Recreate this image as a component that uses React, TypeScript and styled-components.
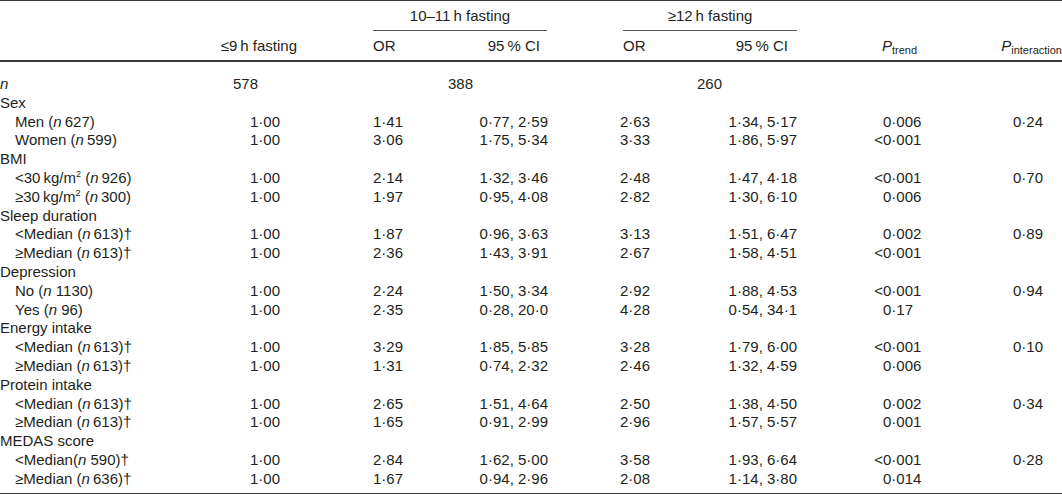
import React from 'react';
import styled, { createGlobalStyle } from 'styled-components';

const GlobalStyle = createGlobalStyle`
    html, body {
        margin: 0;
        padding: 0;
        background: #ffffff;
    }
    body {
        font-family: 'Liberation Sans', Arial, sans-serif;
        color: #231f20;
    }
`;

const COLUMNS = '210px 90px 133px 115px 135px 114px 124px 141px';

const Table = styled.div`
    width: 1062px;
    font-size: 15px;
    border-top: 1px solid #3a3a3a;
    border-bottom: 2px solid #3a3a3a;
`;

const Head = styled.div`
    border-bottom: 2px solid #3a3a3a;
`;

const Row = styled.div<{ $height?: number }>`
    display: grid;
    grid-template-columns: ${COLUMNS};
    height: ${(p) => p.$height ?? 18.8}px;
    line-height: ${(p) => p.$height ?? 18.8}px;
    white-space: nowrap;
`;

const Body = styled.div`
    padding: 13px 0 4.4px;
`;

const Cell = styled.div<{ $align?: 'left' | 'right' | 'center'; $padL?: number; $padR?: number }>`
    text-align: ${(p) => p.$align ?? 'left'};
    padding-left: ${(p) => p.$padL ?? 0}px;
    padding-right: ${(p) => p.$padR ?? 0}px;
`;

const Label = styled.div<{ $indent?: boolean }>`
    padding-left: ${(p) => (p.$indent ? 15 : 0)}px;
`;

const SpanHead = styled.div<{ $col: string; $offset: number }>`
    grid-column: ${(p) => p.$col};
    display: flex;
    padding-left: ${(p) => p.$offset}px;
`;

const SpanTitle = styled.div`
    width: 174px;
    text-align: center;
    line-height: 29px;
    border-bottom: 1px solid #555;
`;

const Em = styled.i``;

const Sub = styled.sub`
    font-size: 11px;
    vertical-align: -3px;
    line-height: 0;
`;

const Sup = styled.sup`
    font-size: 9px;
    vertical-align: 6px;
    line-height: 0;
`;

const Hang = styled.span`
    margin-left: -0.584em;
`;

type DataRow = { label: React.ReactNode; vals?: string[] };

const N = ({ v }: { v: string }) => (
    <>
        (<Em>n</Em>
        {'\u2009'}
        {v})
    </>
);

const rows: DataRow[] = [
    { label: 'Sex' },
    { label: <>Men <N v="627" /></>, vals: ['1·00', '1·41', '0·77, 2·59', '2·63', '1·34, 5·17', '0·006', '0·24'] },
    { label: <>Women <N v="599" /></>, vals: ['1·00', '3·06', '1·75, 5·34', '3·33', '1·86, 5·97', '<0·001', ''] },
    { label: 'BMI' },
    {
        label: <>&lt;30{'\u2009'}kg/m<Sup>2</Sup> <N v="926" /></>,
        vals: ['1·00', '2·14', '1·32, 3·46', '2·48', '1·47, 4·18', '<0·001', '0·70'],
    },
    {
        label: <>≥30{'\u2009'}kg/m<Sup>2</Sup> <N v="300" /></>,
        vals: ['1·00', '1·97', '0·95, 4·08', '2·82', '1·30, 6·10', '0·006', ''],
    },
    { label: 'Sleep duration' },
    { label: <>&lt;Median <N v="613" />†</>, vals: ['1·00', '1·87', '0·96, 3·63', '3·13', '1·51, 6·47', '0·002', '0·89'] },
    { label: <>≥Median <N v="613" />†</>, vals: ['1·00', '2·36', '1·43, 3·91', '2·67', '1·58, 4·51', '<0·001', ''] },
    { label: 'Depression' },
    { label: <>No (<Em>n</Em> 1130)</>, vals: ['1·00', '2·24', '1·50, 3·34', '2·92', '1·88, 4·53', '<0·001', '0·94'] },
    { label: <>Yes (<Em>n</Em> 96)</>, vals: ['1·00', '2·35', '0·28, 20·0', '4·28', '0·54, 34·1', '0·17', ''] },
    { label: 'Energy intake' },
    { label: <>&lt;Median <N v="613" />†</>, vals: ['1·00', '3·29', '1·85, 5·85', '3·28', '1·79, 6·00', '<0·001', '0·10'] },
    { label: <>≥Median <N v="613" />†</>, vals: ['1·00', '1·31', '0·74, 2·32', '2·46', '1·32, 4·59', '0·006', ''] },
    { label: 'Protein intake' },
    { label: <>&lt;Median <N v="613" />†</>, vals: ['1·00', '2·65', '1·51, 4·64', '2·50', '1·38, 4·50', '0·002', '0·34'] },
    { label: <>≥Median <N v="613" />†</>, vals: ['1·00', '1·65', '0·91, 2·99', '2·96', '1·57, 5·57', '0·001', ''] },
    { label: 'MEDAS score' },
    { label: <>&lt;Median(<Em>n</Em> 590)†</>, vals: ['1·00', '2·84', '1·62, 5·00', '3·58', '1·93, 6·64', '<0·001', '0·28'] },
    { label: <>≥Median <N v="636" />†</>, vals: ['1·00', '1·67', '0·94, 2·96', '2·08', '1·14, 3·80', '0·014', ''] },
];

const Trend = ({ v }: { v: string }) =>
    v.startsWith('<') ? (
        <>
            <Hang>&lt;</Hang>
            {v.slice(1)}
        </>
    ) : (
        <>{v}</>
    );

const App = () => {
    return (
        <>
            <GlobalStyle />
            <Table>
                <Head>
                    <Row $height={30}>
                        <Cell />
                        <Cell />
                        <SpanHead $col="3 / 5" $offset={73}>
                            <SpanTitle>10–11{'\u2009'}h fasting</SpanTitle>
                        </SpanHead>
                        <SpanHead $col="5 / 7" $offset={75}>
                            <SpanTitle>≥12{'\u2009'}h fasting</SpanTitle>
                        </SpanHead>
                        <Cell />
                        <Cell />
                    </Row>
                    <Row $height={29}>
                        <Cell />
                        <Cell $align="right" $padR={3}>
                            ≤9{'\u2009'}h fasting
                        </Cell>
                        <Cell $padL={73}>OR</Cell>
                        <Cell $align="right" $padR={8}>
                            95{'\u2009'}% CI
                        </Cell>
                        <Cell $padL={75}>OR</Cell>
                        <Cell $align="right" $padR={9}>
                            95{'\u2009'}% CI
                        </Cell>
                        <Cell $align="right" $padR={4}>
                            <Em>P</Em>
                            <Sub>trend</Sub>
                        </Cell>
                        <Cell $align="right">
                            <Em>P</Em>
                            <Sub>interaction</Sub>
                        </Cell>
                    </Row>
                </Head>
                <Body>
                    <Row>
                        <Label>
                            <Em>n</Em>
                        </Label>
                        <Cell $padL={23}>578</Cell>
                        <Cell />
                        <Cell $padL={15}>388</Cell>
                        <Cell />
                        <Cell $padL={14}>260</Cell>
                        <Cell />
                        <Cell />
                    </Row>
                    {rows.map((r, i) => (
                        <Row key={i}>
                            <Label $indent={!!r.vals}>{r.label}</Label>
                            {r.vals && (
                                <>
                                    <Cell $align="right" $padR={20}>
                                        {r.vals[0]}
                                    </Cell>
                                    <Cell $padL={73}>{r.vals[1]}</Cell>
                                    <Cell $align="right">{r.vals[2]}</Cell>
                                    <Cell $padL={72}>{r.vals[3]}</Cell>
                                    <Cell $align="right">{r.vals[4]}</Cell>
                                    <Cell $padL={86}>
                                        <Trend v={r.vals[5]} />
                                    </Cell>
                                    <Cell $align="right" $padR={19}>
                                        {r.vals[6]}
                                    </Cell>
                                </>
                            )}
                        </Row>
                    ))}
                </Body>
            </Table>
        </>
    );
};

export default App;
